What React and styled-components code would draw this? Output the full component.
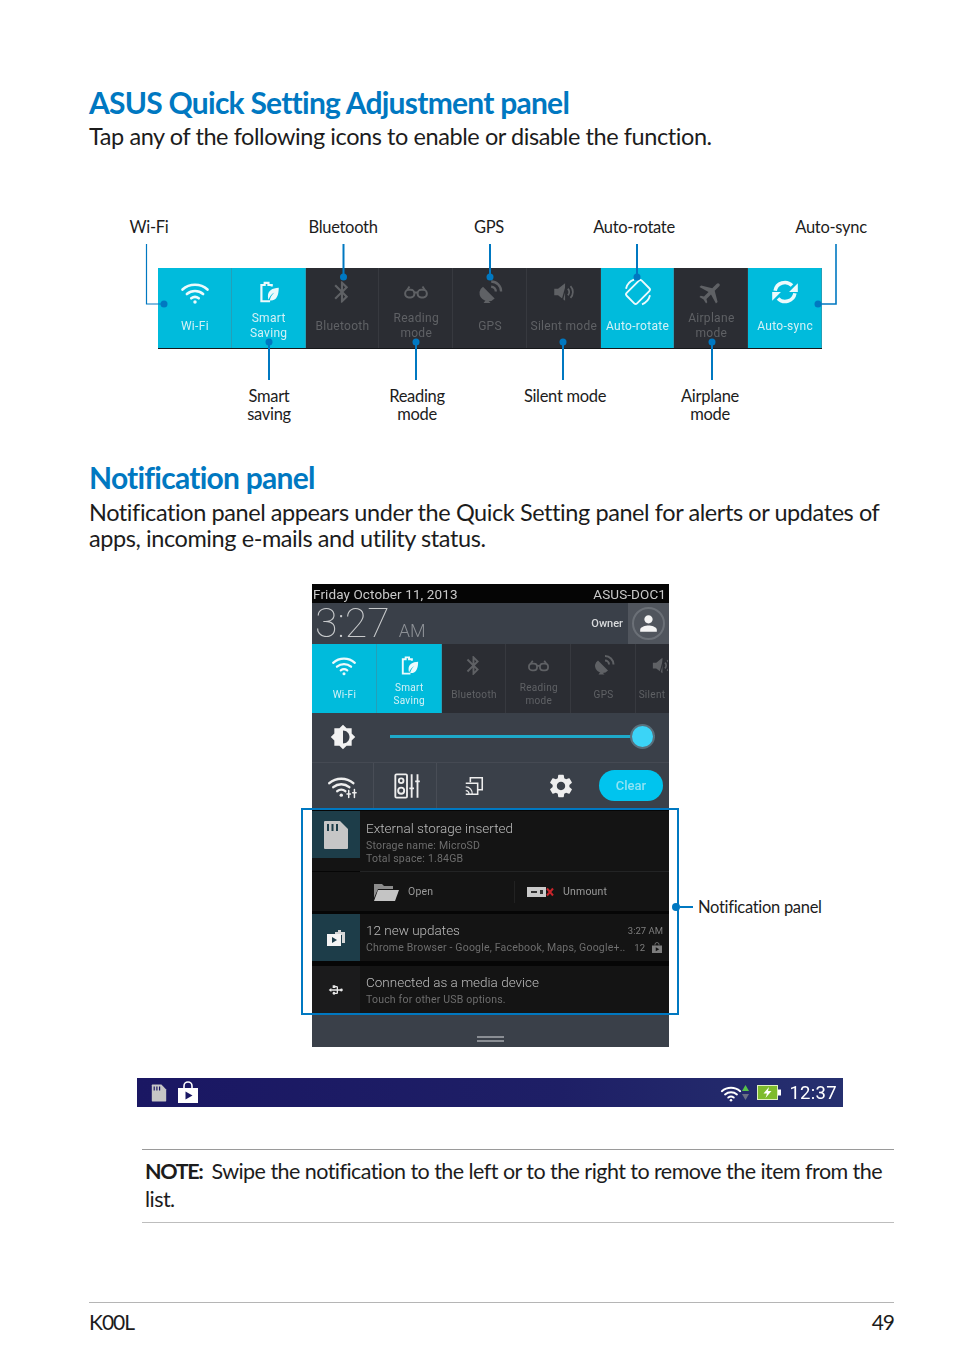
import React from "react";
import styled, { createGlobalStyle } from "styled-components";
import {
  MdBluetooth,
  MdAirplanemodeActive,
  MdSettings,
  MdPerson,
  MdBrightnessMedium,
  MdUsb,
} from "react-icons/md";

const BLUE = "#0078c1";
const TEAL = "#00bbdc";

const GlobalStyle = createGlobalStyle`
  html, body { margin: 0; padding: 0; background: #fff; }
  body { font-family: "Lato", "Open Sans", sans-serif; color: #1c1c1c; }
`;

const Page = styled.div`
  width: 954px;
  min-height: 1357px;
  padding-top: 86px;
  box-sizing: border-box;
  overflow: hidden;
`;

const Title = styled.h2`
  margin: ${(p) => p.$top || 0}px 0 0 89px;
  font-size: 30px;
  line-height: 32px;
  font-weight: 700;
  letter-spacing: -0.75px;
  color: ${BLUE};
  white-space: nowrap;
`;

const Para = styled.p`
  margin: ${(p) => p.$top || 5}px 0 0 89px;
  font-size: 23.5px;
  line-height: 26px;
  letter-spacing: -0.42px;
  white-space: nowrap;
`;

/* ---------- annotated quick settings bar ---------- */

const Figure = styled.div`
  position: relative;
  margin-top: 68px;
  font-size: 16.5px;
  line-height: 18px;
`;

const CalloutRow = styled.div`
  display: flex;
  height: ${(p) => p.$h}px;
  align-items: ${(p) => (p.$top ? "center" : "flex-start")};
`;

const Callout = styled.div`
  width: 0;
  margin-left: ${(p) => p.$gap}px;
  display: flex;
  justify-content: center;
  text-align: center;
  white-space: nowrap;
  letter-spacing: -0.3px;
`;

const Bar = styled.div`
  display: flex;
  width: 664px;
  margin: 31px 0 38px 158px;
  background: #2b2d33;
  border-bottom: 1px solid #15171a;
  box-sizing: border-box;
  filter: blur(0.35px);
`;

const Overlay = styled.svg`
  position: absolute;
  left: 0;
  top: 0;
`;

const Tile = styled.div`
  flex: ${(p) => (p.$small ? "none" : "1")};
  width: ${(p) => (p.$small ? (p.$cut ? "32px" : "64.8px") : "auto")};
  height: ${(p) => (p.$small ? 69 : 80)}px;
  padding: ${(p) => (p.$small ? 5 : 6)}px 0 0 ${(p) => (p.$cut ? 0 : 1)}px;
  box-sizing: border-box;
  display: flex;
  flex-direction: column;
  align-items: center;
  overflow: hidden;
  background: ${(p) => (p.$on ? TEAL : "#2b2d33")};
  color: ${(p) => (p.$on ? "#ecfafc" : "#5f6165")};
  border-right: ${(p) => (p.$cut ? "none" : `1px solid ${p.$on ? "#23a0b8" : "#37393f"}`)};
  font-family: "Roboto", sans-serif;
`;

const TileIcon = styled.div`
  height: ${(p) => (p.$small ? 32 : 36)}px;
  margin-left: ${(p) => (p.$cut ? 20 : 0)}px;
  display: flex;
  align-items: center;
  justify-content: center;
`;

const TileLabel = styled.div`
  height: ${(p) => (p.$small ? 26 : 32)}px;
  display: flex;
  align-items: center;
  text-align: center;
  white-space: pre-line;
  font-size: ${(p) => (p.$small ? 10 : 12)}px;
  line-height: ${(p) => (p.$small ? 13 : 15)}px;
  letter-spacing: 0.3px;
  color: ${(p) => (p.$on ? "#d3f1f6" : "#5f6165")};
`;

/* ---------- phone screenshot ---------- */

const PhoneFigure = styled.div`
  position: relative;
  margin-top: 33px;
  padding-left: 312px;
`;

const Phone = styled.div`
  width: 357px;
  background: #3a4049;
  color: #d8d8d8;
  font-family: "Roboto", sans-serif;
  filter: blur(0.4px);
`;

const DateBar = styled.div`
  height: 19px;
  background: #050505;
  display: flex;
  justify-content: space-between;
  align-items: center;
  padding: 0 3px 0 1px;
  font-size: 13.5px;
  color: #c9c9c9;
  letter-spacing: 0.1px;
`;

const ClockRow = styled.div`
  height: 41px;
  display: flex;
  align-items: stretch;
`;

const Clock = styled.div`
  flex: 1;
  display: flex;
  align-items: baseline;
  padding: 0 0 0 3px;
  font-size: 41px;
  font-weight: 100;
  line-height: 41px;
  color: #c8cacc;
`;

const Meridiem = styled.span`
  margin-left: 9px;
  font-size: 18px;
  font-weight: 300;
  color: #8d9196;
`;

const Owner = styled.div`
  align-self: center;
  margin-right: 5px;
  font-size: 11px;
  font-weight: 500;
  color: #d8dadc;
`;

const AvatarBox = styled.div`
  width: 41px;
  background: #50555d;
  display: flex;
  align-items: center;
  justify-content: center;
`;

const Avatar = styled.div`
  width: 33px;
  height: 33px;
  box-sizing: border-box;
  border: 2px solid #6b7077;
  border-radius: 50%;
  color: #f4f4f4;
  display: flex;
  align-items: center;
  justify-content: center;
`;

const TileStrip = styled.div`
  display: flex;
  overflow: hidden;
  background: #2b2d33;
`;

const SliderRow = styled.div`
  height: 50px;
  display: flex;
  align-items: center;
  padding: 0 14px 2px 18px;
  box-sizing: border-box;
  color: #f2f2f2;
  border-bottom: 1px solid #454a53;
`;

const SliderTrack = styled.div`
  position: relative;
  flex: 1;
  height: 3px;
  margin-left: 34px;
  background: #1ea9c9;
`;

const SliderThumb = styled.div`
  position: absolute;
  right: 0;
  top: -11px;
  width: 25px;
  height: 25px;
  box-sizing: border-box;
  border: 2px solid #59707c;
  border-radius: 50%;
  background: #3bd4f7;
`;

const ToolRow = styled.div`
  height: 45px;
  display: flex;
  align-items: center;
  color: #eeeeee;
`;

const ToolCell = styled.div`
  width: ${(p) => p.$w}px;
  height: 100%;
  padding-left: ${(p) => p.$pad || 0}px;
  display: flex;
  align-items: center;
  justify-content: center;
  border-right: ${(p) => (p.$line ? "1px solid #484d56" : "none")};
  box-sizing: border-box;
`;

const ClearButton = styled.div`
  width: 64px;
  height: 31px;
  border-radius: 16px;
  background: #00c4ee;
  color: #8fe3f3;
  font-size: 13px;
  font-weight: 500;
  display: flex;
  align-items: center;
  justify-content: center;
`;

const NotifyList = styled.div`
  padding-top: 3px;
  background: #060606;
`;

const NotifyRow = styled.div`
  display: flex;
  align-items: flex-start;
  height: ${(p) => p.$h || 47}px;
  background: #141414;
  margin-top: ${(p) => p.$gap || 0}px;
`;

const NotifyIcon = styled.div`
  width: 48px;
  height: 47px;
  flex: none;
  display: flex;
  align-items: center;
  justify-content: center;
  background: ${(p) => (p.$plain ? "#1b1b1c" : "#1d3d49")};
  color: #e6e6e6;
`;

const NotifyBody = styled.div`
  flex: 1;
  padding: ${(p) => p.$pad || 7}px 6px 0 6px;
  min-width: 0;
`;

const NotifyTitle = styled.div`
  font-size: 13.5px;
  line-height: 18px;
  font-weight: 300;
  color: #bcbcbc;
`;

const NotifySub = styled.div`
  font-size: 10.5px;
  line-height: 13px;
  letter-spacing: 0.2px;
  color: #6d6d6d;
  white-space: nowrap;
`;

const TitleLine = styled.div`
  display: flex;
  justify-content: space-between;
  align-items: center;
  margin-bottom: 2px;
`;

const SubLine = styled.div`
  display: flex;
  justify-content: space-between;
  align-items: center;
`;

const SubBlock = styled.div`
  margin-top: 2px;
`;

const Meta = styled.span`
  display: flex;
  align-items: center;
  gap: 6px;
  font-size: 9.5px;
  color: #7d7d7d;
  white-space: nowrap;
`;

const ActionRow = styled.div`
  height: 39px;
  background: #141414;
  display: flex;
  align-items: center;
`;

const Action = styled.div`
  width: ${(p) => p.$w}px;
  height: 22px;
  padding-left: ${(p) => p.$pad}px;
  box-sizing: border-box;
  display: flex;
  align-items: center;
  gap: 9px;
  font-size: 10.5px;
  letter-spacing: 0.2px;
  color: #9a9a9a;
  border-right: ${(p) => (p.$line ? "1px solid #222" : "none")};
`;

const ActionRule = styled.div`
  height: 1px;
  margin-left: 48px;
  background: #232425;
`;

const Handle = styled.div`
  height: 34px;
  display: flex;
  align-items: flex-end;
  justify-content: center;
  padding-bottom: 5px;
  box-sizing: border-box;
`;

const HandleBars = styled.div`
  width: 27px;
  height: 6px;
  border-top: 2px solid #8a8e94;
  border-bottom: 2px solid #8a8e94;
  box-sizing: border-box;
`;

const Highlight = styled.div`
  position: absolute;
  left: 301px;
  top: 224px;
  width: 378px;
  height: 207px;
  box-sizing: border-box;
  border: 2px solid ${BLUE};
`;

const HighlightCallout = styled.div`
  position: absolute;
  left: 672px;
  top: 314px;
  display: flex;
  align-items: center;
  font-size: 16.5px;
  line-height: 18px;
  letter-spacing: -0.3px;
  white-space: nowrap;
`;

const CalloutDot = styled.span`
  width: 8px;
  height: 8px;
  border-radius: 50%;
  background: ${BLUE};
`;

const CalloutLine = styled.span`
  width: 13px;
  height: 2px;
  margin-right: 5px;
  background: ${BLUE};
`;

/* ---------- status bar ---------- */

const StatusBar = styled.div`
  width: 706px;
  height: 29px;
  margin: 31px 0 0 137px;
  background: linear-gradient(90deg, #1a1763 0%, #1e1f66 60%, #26306f 100%);
  display: flex;
  align-items: center;
  padding: 0 6px 0 14px;
  box-sizing: border-box;
  color: #fff;
  font-family: "Roboto", sans-serif;
  filter: blur(0.3px);
`;

const StatusLeft = styled.div`
  flex: 1;
  display: flex;
  align-items: center;
  gap: 9px;
`;

const StatusGap = styled.span`
  width: 8px;
`;

const StatusTime = styled.div`
  margin-left: 8px;
  font-size: 18.5px;
  letter-spacing: 0.3px;
`;

/* ---------- note and footer ---------- */

const Note = styled.div`
  margin: 42px 0 0 142px;
  width: 752px;
  box-sizing: border-box;
  padding: 7px 0 9px 3px;
  border-top: 1px solid #9a9a9a;
  border-bottom: 1px solid #bdbdbd;
  font-size: 21.5px;
  line-height: 28px;
  letter-spacing: -0.55px;
  white-space: nowrap;
`;

const NoteLabel = styled.strong`
  font-weight: 700;
  letter-spacing: -1.35px;
  margin-right: 4px;
`;

const Footer = styled.div`
  margin: 79px 0 0 89px;
  width: 805px;
  padding-top: 6px;
  border-top: 1px solid #b5b5b5;
  display: flex;
  justify-content: space-between;
  font-size: 21px;
  line-height: 26px;
  letter-spacing: -1px;
`;

/* ---------- icons ---------- */

const WifiIcon = ({ size = 30 }) => (
  <svg width={size} height={size} viewBox="0 0 24 24" fill="none" stroke="currentColor" strokeWidth="2.1" strokeLinecap="round">
    <path d="M2 10a15 15 0 0 1 20 0" />
    <path d="M5.5 13.6a10 10 0 0 1 13 0" />
    <path d="M9 17a5 5 0 0 1 6 0" />
    <circle cx="12" cy="20" r="1.4" fill="currentColor" stroke="none" />
  </svg>
);

const LeafIcon = ({ size = 26 }) => (
  <svg width={size} height={size} viewBox="0 0 24 24" fill="none">
    <path d="M14.5 7V5.5h-3V3.5H8v2H5v15h8" stroke="currentColor" strokeWidth="2" />
    <path d="M21 8c-6 .3-10 2.5-10 8 0 1.300.2 2.300.6 3.200 1-3 2.700-5.200 5.400-6.700-2.300 2-3.700 4.300-4.300 7.300C19 20.500 21 15 21 8z" fill="currentColor" />
  </svg>
);

const GlassesIcon = ({ size = 26 }) => (
  <svg width={size} height={size} viewBox="0 0 24 24" fill="none" stroke="currentColor" strokeWidth="1.8">
    <rect x="2" y="10" width="8.500" height="7" rx="3.200" />
    <rect x="13.500" y="10" width="8.500" height="7" rx="3.200" />
    <path d="M10.500 12.500h3M4 10l2-3M20 10l-2-3" />
  </svg>
);

const DishIcon = ({ size = 28 }) => (
  <svg width={size} height={size} viewBox="0 0 24 24" fill="none" stroke="currentColor" strokeWidth="2">
    <path d="M6 7.500 16 17.500A7.500 7.500 0 0 1 3 12a7 7 0 0 1 3-4.500z" fill="currentColor" stroke="none" />
    <path d="M9 18l-2.500 3.500h6" fill="currentColor" stroke="none" />
    <path d="M13 3a8.500 8.500 0 0 1 8.500 8.500" />
    <path d="M13 7.500a4 4 0 0 1 4 4" />
  </svg>
);

const SilentIcon = ({ size = 26 }) => (
  <svg width={size} height={size} viewBox="0 0 24 24" fill="none" stroke="currentColor" strokeWidth="1.6">
    <path d="M3 9h3.500L13 4v16l-6.500-5H3z" fill="currentColor" stroke="none" />
    <path d="M15.500 9a4 4 0 0 1 0 6M18 6.500a8 8 0 0 1 0 11" />
    <path d="M10 21 15 3" stroke="#2b2d33" strokeWidth="1.200" />
  </svg>
);

const RotateIcon = ({ size = 32 }) => (
  <svg width={size} height={size} viewBox="0 0 24 24" fill="none" stroke="currentColor" strokeWidth="1.400">
    <rect x="6.500" y="4" width="11" height="16" rx="1.500" transform="rotate(45 12 12)" />
    <path d="M3 9.500A9.500 9.500 0 0 1 9 2.800M21 14.500a9.500 9.500 0 0 1-6 6.700" />
  </svg>
);

const SyncIcon = ({ size = 28 }) => (
  <svg width={size} height={size} viewBox="0 0 24 24" fill="none" stroke="currentColor" strokeWidth="3">
    <path d="M3.500 11a8.500 8.500 0 0 1 14.500-4.500" />
    <path d="M20.500 13a8.500 8.500 0 0 1-14.500 4.500" />
    <path d="M23 4.500v7.500h-7.500z" fill="currentColor" stroke="none" />
    <path d="M1 19.500V12h7.500z" fill="currentColor" stroke="none" />
  </svg>
);

const PlaneIcon = ({ size = 28 }) => (
  <MdAirplanemodeActive size={size} style={{ transform: "rotate(45deg)" }} />
);

const SpeakerSlidersIcon = () => (
  <svg width="28" height="28" viewBox="0 0 24 24" fill="none" stroke="currentColor" strokeWidth="1.600">
    <rect x="2" y="2" width="10" height="20" rx="1" />
    <circle cx="7" cy="7.500" r="2" />
    <circle cx="7" cy="16" r="2.600" />
    <path d="M16 2v20M21 2v20M14 14h4M19 8h4" />
  </svg>
);

const CastIcon = () => (
  <svg width="22" height="22" viewBox="0 0 24 24" fill="none" stroke="currentColor" strokeWidth="1.700">
    <path d="M8 8V3h13v13h-5" />
    <path d="M3 9h13v12H3" />
    <path d="M3 13a7 7 0 0 1 7 8M3 17a3.500 3.500 0 0 1 3.500 4" strokeWidth="1.400" />
  </svg>
);

const WifiPlusIcon = () => (
  <svg width="32" height="28" viewBox="0 0 28 24" fill="none" stroke="currentColor" strokeWidth="2.200" strokeLinecap="round">
    <path d="M2 9.500a16 16 0 0 1 21 0" />
    <path d="M5.500 13a11 11 0 0 1 14 0" />
    <path d="M9 16.500a5.500 5.500 0 0 1 7 0" />
    <circle cx="12.500" cy="20" r="1.500" fill="currentColor" stroke="none" />
    <path d="M19 16v6M24 15v7M17.500 19h3M22.500 18h3" strokeWidth="1.300" />
  </svg>
);

const SdIcon = ({ w = 26, h = 30, notch = "#141414" }) => (
  <svg width={w} height={h} viewBox="0 0 26 30">
    <path d="M1 2a1 1 0 0 1 1-1h15l8 8v19a1 1 0 0 1-1 1H2a1 1 0 0 1-1-1z" fill="#c6c6c6" />
    <path d="M4 4h2v7H4zM8.500 4h2v7h-2zM13 4h2v7h-2z" fill={notch} />
  </svg>
);

const FolderIcon = () => (
  <svg width="26" height="18" viewBox="0 0 26 18">
    <path d="M1 1h8l2 2h9v3H5L1 15z" fill="#8c8c8c" />
    <path d="M5 7h21l-4 11H1z" fill="#c4c4c4" />
  </svg>
);

const DriveIcon = () => (
  <svg width="27" height="10" viewBox="0 0 27 10">
    <rect x="0" y="0" width="19" height="10" fill="#c9c9c9" />
    <rect x="4" y="4" width="6" height="2" fill="#333" />
    <rect x="13" y="3" width="3" height="4" fill="#333" />
    <path d="M20 1.500 26 8.500M26 1.500 20 8.500" stroke="#c8242a" strokeWidth="2" />
  </svg>
);

const BagIcon = ({ size = 18, hole = "#1d3d49" }) => (
  <svg width={size} height={size} viewBox="0 0 24 24">
    <path d="M2 7h20v15H2z" fill="currentColor" />
    <path d="M8 7V5a4 4 0 0 1 8 0v2" fill="none" stroke="currentColor" strokeWidth="1.600" />
    <path d="M9.500 10.500v8l7-4z" fill={hole} />
  </svg>
);

const BagStackIcon = () => (
  <svg width="20" height="18" viewBox="0 0 20 18">
    <path d="M9 3h3V1h3v2h4v11h-3V6H9z" fill="#d6d6d6" />
    <path d="M1 5h14v12H1z" fill="#f4f4f4" />
    <path d="M6 8v6l5-3z" fill="#1d3d49" />
  </svg>
);

const BatteryIcon = () => (
  <svg width="24" height="15" viewBox="0 0 24 15">
    <rect x="0.500" y="0.500" width="20" height="14" fill="#7ebb2d" stroke="#dff0c0" />
    <rect x="21" y="4.500" width="3" height="6" fill="#fff" />
    <path d="M12 2 6.500 8.500h3.500L8.500 13 14.500 6h-3.500z" fill="#fff" />
  </svg>
);

const DataArrows = () => (
  <svg width="7" height="15" viewBox="0 0 7 15">
    <path d="M3.500 0 7 6H0z" fill="#57c24a" />
    <path d="M3.500 15 7 9H0z" fill="#6a6f85" />
  </svg>
);

/* ---------- data ---------- */

const figureTiles = [
  { label: "Wi-Fi", icon: <WifiIcon />, on: true },
  { label: "Smart\nSaving", icon: <LeafIcon />, on: true },
  { label: "Bluetooth", icon: <MdBluetooth size={26} /> },
  { label: "Reading\nmode", icon: <GlassesIcon /> },
  { label: "GPS", icon: <DishIcon /> },
  { label: "Silent mode", icon: <SilentIcon /> },
  { label: "Auto-rotate", icon: <RotateIcon />, on: true },
  { label: "Airplane\nmode", icon: <PlaneIcon /> },
  { label: "Auto-sync", icon: <SyncIcon />, on: true },
];

const phoneTiles = [
  { label: "Wi-Fi", icon: <WifiIcon size={26} />, on: true },
  { label: "Smart\nSaving", icon: <LeafIcon size={23} />, on: true },
  { label: "Bluetooth", icon: <MdBluetooth size={23} /> },
  { label: "Reading\nmode", icon: <GlassesIcon size={23} /> },
  { label: "GPS", icon: <DishIcon size={24} /> },
  { label: "Silent", icon: <SilentIcon size={23} />, cut: true },
];

const topCallouts = [
  ["Wi-Fi", 149],
  ["Bluetooth", 194],
  ["GPS", 146],
  ["Auto-rotate", 145],
  ["Auto-sync", 197],
];

const bottomCallouts = [
  [["Smart", "saving"], 269],
  [["Reading", "mode"], 148],
  [["Silent mode"], 148],
  [["Airplane", "mode"], 145],
];

const topLeaders = [343.5, 490, 637];
const bottomLeaders = [269, 416, 563, 712];

const QuickTile = ({ tile, small }) => (
  <Tile $on={tile.on} $small={small} $cut={tile.cut}>
    <TileIcon $small={small} $cut={tile.cut}>
      {tile.icon}
    </TileIcon>
    <TileLabel $on={tile.on} $small={small}>
      {tile.label}
    </TileLabel>
  </Tile>
);

const App = () => {
  return (
    <Page>
      <GlobalStyle />
      <Title>ASUS Quick Setting Adjustment panel</Title>
      <Para>Tap any of the following icons to enable or disable the function.</Para>

      <Figure>
        <CalloutRow $h={20} $top>
          {topCallouts.map(([text, gap]) => (
            <Callout key={text} $gap={gap}>
              {text}
            </Callout>
          ))}
        </CalloutRow>
        <Bar>
          {figureTiles.map((tile) => (
            <QuickTile key={tile.label} tile={tile} />
          ))}
        </Bar>
        <CalloutRow $h={36}>
          {bottomCallouts.map(([lines, gap]) => (
            <Callout key={lines[0]} $gap={gap}>
              <div>
                {lines.map((line) => (
                  <div key={line}>{line}</div>
                ))}
              </div>
            </Callout>
          ))}
        </CalloutRow>
        <Overlay width="954" height="206" viewBox="0 0 954 206">
          <g fill="none" stroke={BLUE}>
            <path d="M146.500 27V87H164" strokeWidth="1.200" />
            <path d="M836 27V87H818" strokeWidth="1.600" />
            {topLeaders.map((x) => (
              <path key={x} d={`M${x} 27V60`} strokeWidth="2" />
            ))}
            {bottomLeaders.map((x) => (
              <path key={x} d={`M${x} 125V163`} strokeWidth="2" />
            ))}
          </g>
          <g fill={BLUE}>
            <circle cx="164" cy="87" r="3.500" />
            <circle cx="818" cy="87" r="3.500" />
            {topLeaders.map((x) => (
              <circle key={x} cx={x} cy="60" r="3.500" />
            ))}
            {bottomLeaders.map((x) => (
              <circle key={x} cx={x} cy="125" r="3.500" />
            ))}
          </g>
        </Overlay>
      </Figure>

      <Title $top={38}>Notification panel</Title>
      <Para $top={6}>
        Notification panel appears under the Quick Setting panel for alerts or updates of
        <br />
        apps, incoming e-mails and utility status.
      </Para>

      <PhoneFigure>
        <Phone>
          <DateBar>
            <span>Friday October 11, 2013</span>
            <span>ASUS-DOC1</span>
          </DateBar>
          <ClockRow>
            <Clock>
              3:27<Meridiem>AM</Meridiem>
            </Clock>
            <Owner>Owner</Owner>
            <AvatarBox>
              <Avatar>
                <MdPerson size={25} />
              </Avatar>
            </AvatarBox>
          </ClockRow>
          <TileStrip>
            {phoneTiles.map((tile) => (
              <QuickTile key={tile.label} tile={tile} small />
            ))}
          </TileStrip>
          <SliderRow>
            <MdBrightnessMedium size={26} />
            <SliderTrack>
              <SliderThumb />
            </SliderTrack>
          </SliderRow>
          <ToolRow>
            <ToolCell $w={62} $line>
              <WifiPlusIcon />
            </ToolCell>
            <ToolCell $w={63} $pad={4} $line>
              <SpeakerSlidersIcon />
            </ToolCell>
            <ToolCell $w={73}>
              <CastIcon />
            </ToolCell>
            <ToolCell $w={89} $pad={13}>
              <MdSettings size={28} />
            </ToolCell>
            <ClearButton>Clear</ClearButton>
          </ToolRow>
          <NotifyList>
            <NotifyRow $h={60}>
              <NotifyIcon>
                <SdIcon notch="#1d3d49" />
              </NotifyIcon>
              <NotifyBody $pad={8}>
                <NotifyTitle>External storage inserted</NotifyTitle>
                <SubBlock>
                  <NotifySub>Storage name: MicroSD</NotifySub>
                  <NotifySub>Total space: 1.84GB</NotifySub>
                </SubBlock>
              </NotifyBody>
            </NotifyRow>
            <ActionRule />
            <ActionRow>
              <Action $w={203} $pad={61} $line>
                <FolderIcon />
                Open
              </Action>
              <Action $w={150} $pad={12}>
                <DriveIcon />
                Unmount
              </Action>
            </ActionRow>
            <NotifyRow $gap={3}>
              <NotifyIcon>
                <BagStackIcon />
              </NotifyIcon>
              <NotifyBody>
                <TitleLine>
                  <NotifyTitle>12 new updates</NotifyTitle>
                  <Meta>3:27 AM</Meta>
                </TitleLine>
                <SubLine>
                  <NotifySub>Chrome Browser - Google, Facebook, Maps, Google+..</NotifySub>
                  <Meta>
                    12 <BagIcon size={12} hole="#141414" />
                  </Meta>
                </SubLine>
              </NotifyBody>
            </NotifyRow>
            <NotifyRow $gap={5}>
              <NotifyIcon $plain>
                <MdUsb size={16} style={{ transform: "rotate(-90deg)" }} />
              </NotifyIcon>
              <NotifyBody>
                <NotifyTitle>Connected as a media device</NotifyTitle>
                <SubBlock>
                  <NotifySub>Touch for other USB options.</NotifySub>
                </SubBlock>
              </NotifyBody>
            </NotifyRow>
          </NotifyList>
          <Handle>
            <HandleBars />
          </Handle>
        </Phone>
        <Highlight />
        <HighlightCallout>
          <CalloutDot />
          <CalloutLine />
          Notification panel
        </HighlightCallout>
      </PhoneFigure>

      <StatusBar>
        <StatusLeft>
          <SdIcon w={16} h={18} notch="#1a1763" />
          <BagIcon size={24} hole="#1a1763" />
        </StatusLeft>
        <WifiIcon size={22} />
        <DataArrows />
        <StatusGap />
        <BatteryIcon />
        <StatusTime>12:37</StatusTime>
      </StatusBar>

      <Note>
        <NoteLabel>NOTE:</NoteLabel> Swipe the notification to the left or to the right to remove the item from the
        <br />
        list.
      </Note>

      <Footer>
        <span>K00L</span>
        <span>49</span>
      </Footer>
    </Page>
  );
};

export default App;
